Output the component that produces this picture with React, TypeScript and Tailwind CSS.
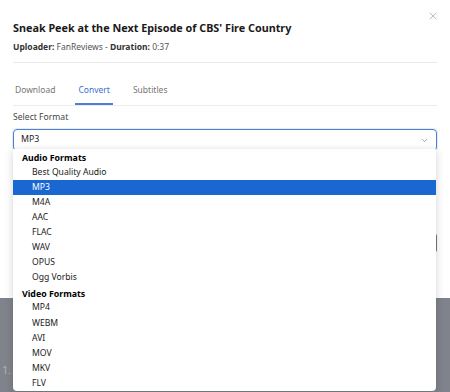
import { ChevronDown, X } from 'lucide-react'

const AUDIO = ['Best Quality Audio', 'MP3', 'M4A', 'AAC', 'FLAC', 'WAV', 'OPUS', 'Ogg Vorbis']
const VIDEO = ['MP4', 'WEBM', 'AVI', 'MOV', 'MKV', 'FLV']

function Option({ label, selected }: { label: string; selected?: boolean }) {
  return (
    <div
      className={`flex h-[15.1px] items-center pl-[19px] text-[8.6px] ${
        selected ? 'bg-[#1a67d2] text-white' : 'text-[#1a1a1a]'
      }`}
    >
      {label}
    </div>
  )
}

function Group({ label }: { label: string }) {
  return (
    <div className="flex h-[15.1px] items-end pl-[9px] text-[8.8px] font-bold leading-[12px] text-black">
      {label}
    </div>
  )
}

export default function App() {
  return (
    <div className="relative h-[392px] w-[450px] overflow-hidden bg-[#80838b] font-['Noto_Sans',sans-serif]">
      <div className="relative h-[298px] bg-white px-[13px] pt-[19px]">
        <button className="absolute right-[11px] top-[10px] text-[#a0a0a0]">
          <X className="h-[12px] w-[12px]" strokeWidth={1.4} />
        </button>

        <h1 className="text-[10.8px] font-bold leading-[18px] text-[#1a1a1a]">
          Sneak Peek at the Next Episode of CBS' Fire Country
        </h1>
        <p className="mt-[3px] text-[8.5px] leading-[14px] text-[#555]">
          <span className="font-bold text-[#333]">Uploader:</span> FanReviews -{' '}
          <span className="font-bold text-[#333]">Duration:</span> 0:37
        </p>
        <div className="mt-[8px] border-t border-[#ebebeb]" />

        <div className="mt-[20px] flex gap-[23px] border-b border-[#ececec] pl-[2px] text-[8.5px] leading-[14px]">
          <div className="pb-[8px] text-[#777]">Download</div>
          <div className="-mx-[3px] border-b-2 border-[#4a7fd6] px-[3px] pb-[6px] text-[#3a6fd0]">Convert</div>
          <div className="pb-[8px] text-[#777]">Subtitles</div>
        </div>

        <div className="mt-[4px] text-[8.6px] leading-[14px] text-[#444]">Select Format</div>
        <div className="mt-[5px] flex h-[22px] items-center justify-between rounded-[4px] border border-[#4a80d0] px-[7px] text-[8.8px] text-[#222] shadow-[0_0_0_1px_rgba(74,128,208,0.15)]">
          <span>MP3</span>
          <ChevronDown className="h-[9px] w-[9px] text-[#666]" strokeWidth={1.5} />
        </div>

        <div className="mt-[82px] h-[20px] rounded-[3px] border border-[#777]" />
      </div>

      <div className="pl-[2px] pt-[64px] text-[11px] text-[#aeb0b5]">1.</div>

      <div className="absolute left-[13px] top-[149.4px] w-[423px] overflow-hidden rounded-b-[4px] bg-white shadow-[0_2px_8px_rgba(0,0,0,0.18)]">
        <Group label="Audio Formats" />
        {AUDIO.map((a) => (
          <Option key={a} label={a} selected={a === 'MP3'} />
        ))}
        <Group label="Video Formats" />
        {VIDEO.map((v) => (
          <Option key={v} label={v} />
        ))}
      </div>
    </div>
  )
}
